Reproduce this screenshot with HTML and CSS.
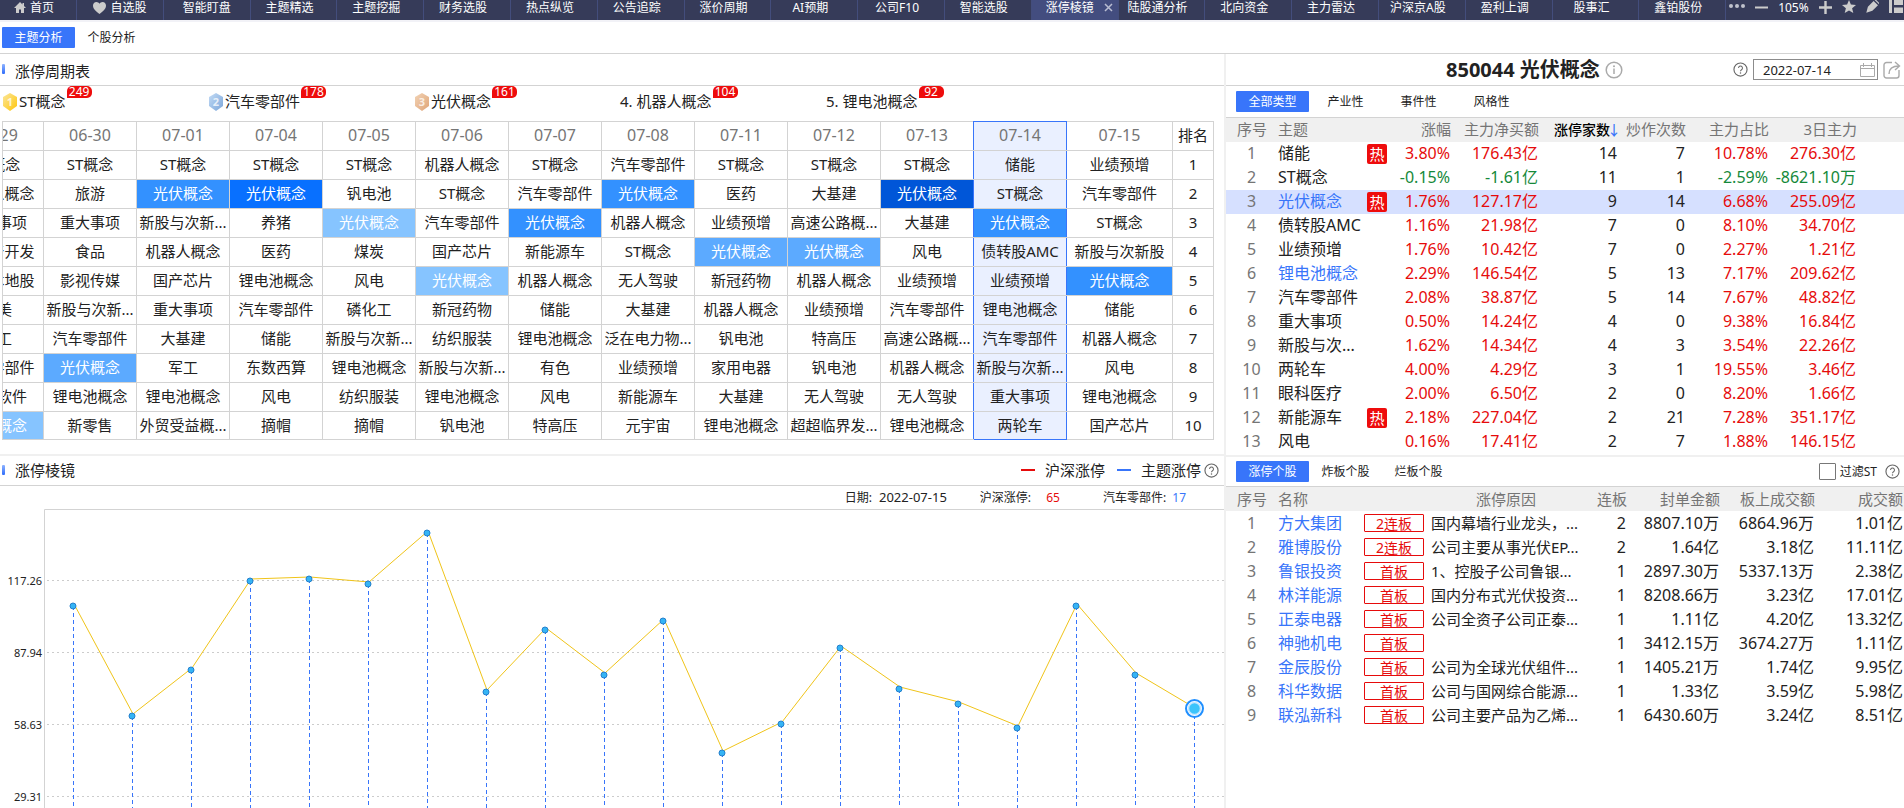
FILE: index.html
```html
<!DOCTYPE html>
<html lang="zh-CN">
<head>
<meta charset="utf-8">
<title>涨停棱镜</title>
<link rel="stylesheet" href="styles.css">
</head>
<body>
<svg class="defs" aria-hidden="true">
  <defs>
    <symbol id="help" viewBox="0 0 16 16"><circle cx="8" cy="8" r="7" fill="none" stroke="#666" stroke-width="1.2"/><path d="M5.9 6.4a2.1 2.1 0 1 1 3.2 1.8c-.8.5-1.1.8-1.1 1.6" fill="none" stroke="#666" stroke-width="1.1"/><circle cx="8" cy="11.7" r=".8" fill="#666"/></symbol>
    <linearGradient id="gold" x1="0" y1="0" x2="1" y2="1"><stop offset="0" stop-color="#fbe69a"/><stop offset="1" stop-color="#ffc60b"/></linearGradient>
    <linearGradient id="silver" x1="0" y1="0" x2="1" y2="1"><stop offset="0" stop-color="#c3dbf5"/><stop offset="1" stop-color="#7ba6da"/></linearGradient>
    <linearGradient id="bronze" x1="0" y1="0" x2="1" y2="1"><stop offset="0" stop-color="#f2d3b5"/><stop offset="1" stop-color="#dfa477"/></linearGradient>
  </defs>
</svg>

<nav class="topbar">
  <a class="nav-item home" href="#"><svg width="12" height="11" viewBox="0 0 12 11"><path d="M6 0 0 6h2v5h3V7.500h2V11h3V6h2L10 4V1H8.500v1.500z" fill="#ccc"/></svg>首页</a>
  <a class="nav-item" href="#"><svg width="13" height="12" viewBox="0 0 13 12"><path d="M6.500 12C3 9.500 0 7 0 3.600 0 1.500 1.500 0 3.400 0c1.300 0 2.500.7 3.100 1.800C7.100.7 8.300 0 9.600 0 11.500 0 13 1.500 13 3.600 13 7 10 9.500 6.500 12z" fill="#ccc"/></svg>自选股</a>
  <a class="nav-item" href="#">智能盯盘</a>
  <a class="nav-item" href="#">主题精选</a>
  <a class="nav-item" href="#">主题挖掘</a>
  <a class="nav-item" href="#">财务选股</a>
  <a class="nav-item" href="#">热点纵览</a>
  <a class="nav-item" href="#">公告追踪</a>
  <a class="nav-item" href="#">涨价周期</a>
  <a class="nav-item" href="#">AI预期</a>
  <a class="nav-item" href="#">公司F10</a>
  <a class="nav-item" href="#">智能选股</a>
  <a class="nav-item active" href="#">涨停棱镜<svg width="9" height="9" viewBox="0 0 9 9"><path d="m1 1 7 7M8 1 1 8" stroke="#b9bdd2" stroke-width="1.500"/></svg></a>
  <a class="nav-item" href="#">陆股通分析</a>
  <a class="nav-item" href="#">北向资金</a>
  <a class="nav-item" href="#">主力雷达</a>
  <a class="nav-item" href="#">沪深京A股</a>
  <a class="nav-item" href="#">盈利上调</a>
  <a class="nav-item" href="#">股事汇</a>
  <a class="nav-item" href="#">鑫铂股份</a>
  <div class="tools">
    <button type="button" aria-label="更多"><svg width="16" height="14" viewBox="0 0 16 14"><g fill="#bfc1cc"><circle cx="2" cy="6" r="2"/><circle cx="8" cy="6" r="2"/><circle cx="14" cy="6" r="2"/></g></svg></button>
    <button type="button" aria-label="缩小"><svg width="13" height="14" viewBox="0 0 13 14"><path d="M0 7.500h13" stroke="#ccc" stroke-width="2"/></svg></button>
    <span>105%</span>
    <button type="button" aria-label="放大"><svg width="13" height="14" viewBox="0 0 13 14"><path d="M0 7.500h13M6.500 1v13" stroke="#ccc" stroke-width="2.400"/></svg></button>
    <button type="button" aria-label="收藏"><svg width="14" height="14" viewBox="0 0 14 14"><path d="m7 0 1.900 4.600 5.100.4-3.900 3.200L11.300 13 7 10.400 2.700 13l1.200-4.800L0 5l5.100-.4z" fill="#ccc"/></svg></button>
    <button type="button" aria-label="画笔"><svg width="13" height="14" viewBox="0 0 13 14"><path d="m7.600 1 4.400 4.200-5.600 5.600L.3 12.800l1.600-6.100zM8.600 0h1.600L13 2.800v1.400z" fill="#ccc"/></svg></button>
    <button type="button" aria-label="布局"><svg width="14" height="14" viewBox="0 0 14 14"><path d="M0 0h3v13H0zM5 0h9v5H5zM5 7.500h9V13H5z" fill="#ccc"/></svg></button>
  </div>
</nav>

<div class="page-tabs">
  <button type="button" class="tab on">主题分析</button><button type="button" class="tab">个股分析</button>
</div>

<main class="layout">
  <section class="left">
    <header class="panel-title cycle"><h2>涨停周期表</h2></header>
    <div class="ranks">
      <div class="rank"><svg width="16" height="18" viewBox="0 0 16 18"><path d="m8 0 7 4v9l-7 5-7-5V4z" fill="url(#gold)"/><text x="8" y="13" class="medal">1</text></svg>ST概念<span class="count">249</span></div>
      <div class="rank"><svg width="16" height="18" viewBox="0 0 16 18"><path d="m8 0 7 4v9l-7 5-7-5V4z" fill="url(#silver)"/><text x="8" y="13" class="medal">2</text></svg>汽车零部件<span class="count">178</span></div>
      <div class="rank"><svg width="16" height="18" viewBox="0 0 16 18"><path d="m8 0 7 4v9l-7 5-7-5V4z" fill="url(#bronze)"/><text x="8" y="13" class="medal">3</text></svg>光伏概念<span class="count">161</span></div>
      <div class="rank">4. 机器人概念<span class="count">104</span></div>
      <div class="rank">5. 锂电池概念<span class="count">92</span></div>
    </div>

    <div class="cycle-wrap">
      <table class="cycle-table">
        <colgroup><col span="12" class="c-day"><col class="c-last"><col class="c-rank"></colgroup>
        <thead>
          <tr><th>06-29<th>06-30<th>07-01<th>07-04<th>07-05<th>07-06<th>07-07<th>07-08<th>07-11<th>07-12<th>07-13<th>07-14<th>07-15<th>排名</tr>
        </thead>
        <tbody>
          <tr><td>ST概念<td>ST概念<td>ST概念<td>ST概念<td>ST概念<td>机器人概念<td>ST概念<td>汽车零部件<td>ST概念<td>ST概念<td>ST概念<td>储能<td>业绩预增<td>1</tr>
          <tr><td>机器人概念<td>旅游<td class="h3">光伏概念<td class="h4">光伏概念<td>钒电池<td>ST概念<td>汽车零部件<td class="h3">光伏概念<td>医药<td>大基建<td class="h5">光伏概念<td>ST概念<td>汽车零部件<td>2</tr>
          <tr><td>重大事项<td>重大事项<td>新股与次新...<td>养猪<td class="h1">光伏概念<td>汽车零部件<td class="h3">光伏概念<td>机器人概念<td>业绩预增<td>高速公路概...<td>大基建<td class="h3">光伏概念<td>ST概念<td>3</tr>
          <tr><td>房地产开发<td>食品<td>机器人概念<td>医药<td>煤炭<td>国产芯片<td>新能源车<td>ST概念<td class="h2">光伏概念<td class="h2">光伏概念<td>风电<td>债转股AMC<td>新股与次新股<td>4</tr>
          <tr><td>深圳本地股<td>影视传媒<td>国产芯片<td>锂电池概念<td>风电<td class="h1">光伏概念<td>机器人概念<td>无人驾驶<td>新冠药物<td>机器人概念<td>业绩预增<td>业绩预增<td class="h3">光伏概念<td>5</tr>
          <tr><td>医美<td>新股与次新...<td>重大事项<td>汽车零部件<td>磷化工<td>新冠药物<td>储能<td>大基建<td>机器人概念<td>业绩预增<td>汽车零部件<td>锂电池概念<td>储能<td>6</tr>
          <tr><td>军工<td>汽车零部件<td>大基建<td>储能<td>新股与次新...<td>纺织服装<td>锂电池概念<td>泛在电力物...<td>钒电池<td>特高压<td>高速公路概...<td>汽车零部件<td>机器人概念<td>7</tr>
          <tr><td>汽车零部件<td class="h2">光伏概念<td>军工<td>东数西算<td>锂电池概念<td>新股与次新...<td>有色<td>业绩预增<td>家用电器<td>钒电池<td>机器人概念<td>新股与次新...<td>风电<td>8</tr>
          <tr><td>国产软件<td>锂电池概念<td>锂电池概念<td>风电<td>纺织服装<td>锂电池概念<td>风电<td>新能源车<td>大基建<td>无人驾驶<td>无人驾驶<td>重大事项<td>锂电池概念<td>9</tr>
          <tr><td class="h1">光伏概念<td>新零售<td>外贸受益概...<td>摘帽<td>摘帽<td>钒电池<td>特高压<td>元宇宙<td>锂电池概念<td>超超临界发...<td>锂电池概念<td>两轮车<td>国产芯片<td>10</tr>
        </tbody>
      </table>
    </div>

    <header class="panel-title prism">
      <h2>涨停棱镜</h2>
      <div class="legend">
        <span class="dash red-bg"></span><span>沪深涨停</span>
        <span class="dash blue-bg"></span><span class="legend-end">主题涨停<svg width="15" height="15"><use href="#help"/></svg></span>
      </div>
    </header>
    <div class="readout">
      <span>日期: <b class="day">2022-07-15</b></span>
      <span>沪深涨停: <b class="hs">65</b></span>
      <span>汽车零部件: <b class="th">17</b></span>
    </div>
    <svg class="chart" viewBox="0 0 1224 299" role="img" aria-label="涨停家数走势">
      <path class="frame" d="M1224 .5H44.500V299"/>
      <path class="grid" d="M47 71.500H1224M47 143.500H1224M47 215.500H1224M47 287.500H1224"/>
      <g class="axis"><text x="42" y="76">117.26</text><text x="42" y="148">87.94</text><text x="42" y="220">58.63</text><text x="42" y="292">29.31</text></g>
      <path class="drops" d="M73.500 97V299M132.500 207V299M191.500 161V299M250.500 72V299M309.500 70V299M368.500 75V299M427.500 24V299M486.500 183V299M545.500 121V299M604.500 166V299M663.500 112V299M722.500 244V299M781.500 215V299M840.500 139V299M899.500 180V299M958.500 195V299M1017.500 219V299M1076.500 97V299M1135.500 166V299M1194.500 199V299"/>
      <polyline class="line" points="74,95 133,205 192,159 251,70 310,68 369,73 428,22 487,181 546,119 605,164 664,110 723,242 782,213 841,137 900,178 959,193 1018,217 1077,95 1136,164 1195,199"/>
      <g class="dots"><circle cx="73" cy="97" r="3"/><circle cx="132" cy="207" r="3"/><circle cx="191" cy="161" r="3"/><circle cx="250" cy="72" r="3"/><circle cx="309" cy="70" r="3"/><circle cx="368" cy="75" r="3"/><circle cx="427" cy="24" r="3"/><circle cx="486" cy="183" r="3"/><circle cx="545" cy="121" r="3"/><circle cx="604" cy="166" r="3"/><circle cx="663" cy="112" r="3"/><circle cx="722" cy="244" r="3"/><circle cx="781" cy="215" r="3"/><circle cx="840" cy="139" r="3"/><circle cx="899" cy="180" r="3"/><circle cx="958" cy="195" r="3"/><circle cx="1017" cy="219" r="3"/><circle cx="1076" cy="97" r="3"/><circle cx="1135" cy="166" r="3"/></g>
      <circle cx="1194.500" cy="199.500" r="8.500" fill="#fff" stroke="#1f8fff" stroke-width="2"/><circle cx="1194.500" cy="199.500" r="6" fill="#3cc4fb" stroke="#c5e6ff" stroke-width="1.500"/>
    </svg>
  </section>

  <section class="right">
    <header class="theme-head">
      <h1>850044 光伏概念</h1>
      <svg width="18" height="18" viewBox="0 0 18 18"><circle cx="9" cy="9" r="7.800" fill="none" stroke="#aaa" stroke-width="1.500"/><path d="M9 7.500v5.500" stroke="#aaa" stroke-width="1.500"/><circle cx="9" cy="5.200" r="1" fill="#aaa"/></svg>
      <div class="date-tools">
        <svg width="15" height="15"><use href="#help"/></svg>
        <label class="date-box"><input type="text" value="2022-07-14" aria-label="日期"><svg width="15" height="14" viewBox="0 0 15 14"><path d="M.5 2.500h14v11H.5zM.5 5.500h14M3.500 0v4M11.500 0v4M5.500 2.500h4" fill="none" stroke="#aaa"/></svg></label>
        <button type="button" aria-label="分享"><svg width="18" height="18" viewBox="0 0 18 18"><path d="M9 1.500H3.500a2.500 2.500 0 0 0-2.500 2.500v10.500A2.500 2.500 0 0 0 3.500 17h10a2.500 2.500 0 0 0 2.500-2.500V9M6 13c0-5 3-8 10-8M12 1l4.500 4L12 9" fill="none" stroke="#aaa" stroke-width="1.400"/></svg></button>
      </div>
    </header>
    <div class="sub-tabs upper">
      <button type="button" class="tab on">全部类型</button><button type="button" class="tab">产业性</button><button type="button" class="tab">事件性</button><button type="button" class="tab">风格性</button>
    </div>
    <div class="theme-list">
      <table class="data themes">
        <colgroup><col class="w52"><col class="w89"><col class="w20"><col class="w64"><col class="w88"><col class="w79"><col class="w68"><col class="w83"><col class="w88"><col class="w47"></colgroup>
        <thead><tr><th>序号<th>主题<th><th>涨幅<th>主力净买额<th class="sorted">涨停家数<i>↓</i><th>炒作次数<th>主力占比<th>3日主力<th></tr></thead>
        <tbody>
          <tr><td>1<td>储能<td><em>热</em><td>3.80%<td>176.43亿<td>14<td>7<td>10.78%<td>276.30亿<td></tr>
          <tr class="down"><td>2<td>ST概念<td><td>-0.15%<td>-1.61亿<td>11<td>1<td>-2.59%<td>-8621.10万<td></tr>
          <tr class="picked"><td>3<td><a href="#">光伏概念</a><td><em>热</em><td>1.76%<td>127.17亿<td>9<td>14<td>6.68%<td>255.09亿<td></tr>
          <tr><td>4<td>债转股AMC<td><td>1.16%<td>21.98亿<td>7<td>0<td>8.10%<td>34.70亿<td></tr>
          <tr><td>5<td>业绩预增<td><td>1.76%<td>10.42亿<td>7<td>0<td>2.27%<td>1.21亿<td></tr>
          <tr><td>6<td><a href="#">锂电池概念</a><td><td>2.29%<td>146.54亿<td>5<td>13<td>7.17%<td>209.62亿<td></tr>
          <tr><td>7<td>汽车零部件<td><td>2.08%<td>38.87亿<td>5<td>14<td>7.67%<td>48.82亿<td></tr>
          <tr><td>8<td>重大事项<td><td>0.50%<td>14.24亿<td>4<td>0<td>9.38%<td>16.84亿<td></tr>
          <tr><td>9<td>新股与次...<td><td>1.62%<td>14.34亿<td>4<td>3<td>3.54%<td>22.26亿<td></tr>
          <tr><td>10<td>两轮车<td><td>4.00%<td>4.29亿<td>3<td>1<td>19.55%<td>3.46亿<td></tr>
          <tr><td>11<td>眼科医疗<td><td>2.00%<td>6.50亿<td>2<td>0<td>8.20%<td>1.66亿<td></tr>
          <tr><td>12<td>新能源车<td><em>热</em><td>2.18%<td>227.04亿<td>2<td>21<td>7.28%<td>351.17亿<td></tr>
          <tr><td>13<td>风电<td><td>0.16%<td>17.41亿<td>2<td>7<td>1.88%<td>146.15亿<td></tr>
        </tbody>
      </table>
    </div>
    <div class="sub-tabs lower">
      <button type="button" class="tab on">涨停个股</button><button type="button" class="tab">炸板个股</button><button type="button" class="tab">烂板个股</button>
      <div class="filter"><input type="checkbox" id="st"><label for="st">过滤ST</label><svg width="15" height="15"><use href="#help"/></svg></div>
    </div>
    <table class="data stocks">
      <colgroup><col class="w52"><col class="w86"><col class="w67"><col class="w150"><col class="w46"><col class="w93"><col class="w95"><col class="w89"></colgroup>
      <thead><tr><th>序号<th>名称<th><th>涨停原因<th>连板<th>封单金额<th>板上成交额<th>成交额</tr></thead>
      <tbody>
        <tr><td>1<td><a href="#">方大集团</a><td><b>2连板</b><td>国内幕墙行业龙头，...<td>2<td>8807.10万<td>6864.96万<td>1.01亿</tr>
        <tr><td>2<td><a href="#">雅博股份</a><td><b>2连板</b><td>公司主要从事光伏EP...<td>2<td>1.64亿<td>3.18亿<td>11.11亿</tr>
        <tr><td>3<td><a href="#">鲁银投资</a><td><b>首板</b><td>1、控股子公司鲁银...<td>1<td>2897.30万<td>5337.13万<td>2.38亿</tr>
        <tr><td>4<td><a href="#">林洋能源</a><td><b>首板</b><td>国内分布式光伏投资...<td>1<td>8208.66万<td>3.23亿<td>17.01亿</tr>
        <tr><td>5<td><a href="#">正泰电器</a><td><b>首板</b><td>公司全资子公司正泰...<td>1<td>1.11亿<td>4.20亿<td>13.32亿</tr>
        <tr><td>6<td><a href="#">神驰机电</a><td><b>首板</b><td><td>1<td>3412.15万<td>3674.27万<td>1.11亿</tr>
        <tr><td>7<td><a href="#">金辰股份</a><td><b>首板</b><td>公司为全球光伏组件...<td>1<td>1405.21万<td>1.74亿<td>9.95亿</tr>
        <tr><td>8<td><a href="#">科华数据</a><td><b>首板</b><td>公司与国网综合能源...<td>1<td>1.33亿<td>3.59亿<td>5.98亿</tr>
        <tr><td>9<td><a href="#">联泓新科</a><td><b>首板</b><td>公司主要产品为乙烯...<td>1<td>6430.60万<td>3.24亿<td>8.51亿</tr>
      </tbody>
    </table>
  </section>
</main>
</body>
</html>
```
FILE: styles.css
```css
:root {
  --blue: #3875fa;
  --red: #e60b0b;
  --green: #15893a;
  --line: #d3d3d3;
  --soft: #f0f0f0;
  --text: #222;
  --muted: #757575;
}
* { box-sizing: border-box; }
body {
  margin: 0;
  min-height: 100vh;
  display: flex;
  flex-direction: column;
  background: #fff;
  color: var(--text);
  font: 15px/24px "Noto Sans", "Noto Sans CJK SC", sans-serif;
  overflow: hidden;
}
button, input { font: inherit; color: inherit; }
button { border: 0; padding: 0; background: none; cursor: pointer; }
a { color: var(--blue); text-decoration: none; }
svg { display: block; flex: none; }
h1, h2 { margin: 0; font-size: 15px; font-weight: 400; }
table { border-collapse: collapse; table-layout: fixed; white-space: nowrap; }
th { font-weight: 400; }
th, td { padding: 0; }
.defs { position: absolute; width: 0; height: 0; }

.topbar {
  display: flex;
  height: 22px;
  background: #363b59;
  border-bottom: 2px solid #f2f2f7;
  font-size: 12px;
  line-height: 15px;
  color: #fff;
}
.nav-item {
  flex: 1 1 86px;
  display: flex;
  justify-content: center;
  gap: 4px;
  padding-bottom: 5px;
  align-items: center;
  border-right: 1px solid #434d7c;
  color: #fff;
  white-space: nowrap;
}
.nav-item.home { flex: 0 0 77px; padding-right: 8px; }
.nav-item:nth-child(n+4) { padding-right: 8px; }
.nav-item.active { background: #434d7f; gap: 10px; padding: 0 0 5px 9px; }
.tools {
  flex: 0 0 178px;
  display: flex;
  align-items: flex-start;
  gap: 10px;
  padding-left: 3px;
}

.tab {
  width: 73px;
  height: 21px;
  border-radius: 1px;
  font-size: 12px;
  line-height: 21px;
}
.tab.on { background: var(--blue); color: #fff; }
.page-tabs { display: flex; padding: 5px 2px; border-bottom: 1px solid var(--line); }

.layout { flex: 1; display: grid; grid-template-columns: minmax(0, 1224fr) minmax(0, 680fr); }

.panel-title {
  display: flex;
  justify-content: space-between;
  align-items: center;
  padding: 0 5px 0 2px;
  border-bottom: 1px solid var(--line);
}
.panel-title h2 { display: flex; align-items: center; gap: 10px; }
.panel-title h2::before {
  content: "";
  width: 3px;
  height: 10px;
  border-radius: 1px;
  background: linear-gradient(#8fb3ff, #2f6dfb);
}
.cycle { height: 32px; padding-top: 3px; }
.cycle h2::before { margin-bottom: 4px; }
.ranks { display: flex; height: 35px; padding-left: 2px; line-height: 31px; }
.rank { width: 206px; display: flex; gap: 1px; }
.rank svg { margin-top: 7px; }
.medal { font-size: 11px; font-weight: 700; fill: #fff; fill-opacity: .75; text-anchor: middle; }
.count {
  min-width: 25px;
  height: 12px;
  padding: 0 2px;
  border-radius: 5px 5px 5px 0;
  background: #ee0c0c;
  color: #fff;
  font-size: 12px;
  line-height: 12px;
  text-align: center;
}

.cycle-wrap { margin: 0 10px 14px 2px; border-left: 1px solid var(--line); overflow: hidden; }
.cycle-table { width: calc(100% + 53px); margin-left: -53px; text-align: center; }
.c-day { width: 93px; }
.c-rank { width: 41px; }
.cycle-table th, .cycle-table td { height: 29px; line-height: 26px; vertical-align: top; border: 1px solid var(--line); overflow: hidden; }
.cycle-table tr:last-child > td { height: 28px; }
.cycle-table th { font-size: 16px; color: var(--muted); }
.cycle-table th:last-child { font-size: 15px; color: var(--text); }
.cycle-table tr > :nth-child(11) { border-right-color: var(--blue); }
.cycle-table tr > :nth-child(12) { background: #eaf0ff; border-left-color: var(--blue); border-right-color: var(--blue); }
.cycle-table thead tr > :nth-child(12) { border-top-color: var(--blue); }
.cycle-table tr:last-child > td:nth-child(12) { border-bottom-color: var(--blue); }
.cycle-table tr > td.h1 { background: #86c4ff; color: #fff; }
.cycle-table tr > td.h2 { background: #5caaff; color: #fff; }
.cycle-table tr > td.h3 { background: #3391ff; color: #fff; }
.cycle-table tr > td.h4 { background: #0870ff; color: #fff; }
.cycle-table tr > td.h5 { background: #0056d8; color: #fff; }

.prism { height: 32px; border-top: 2px solid var(--soft); line-height: 22px; padding-bottom: 1px; }
.legend { display: flex; align-items: center; gap: 10px; }
.legend-end { display: flex; align-items: center; gap: 3px; }
.dash { width: 14px; height: 2px; }
.red-bg { background: var(--red); }
.blue-bg { margin-left: 2px; background: var(--blue); }
.readout {
  display: flex;
  justify-content: flex-end;
  gap: 33px;
  height: 23px;
  padding-right: 38px;
  font-size: 12px;
  line-height: 23px;
}
.readout b { font-weight: 400; }
.readout .day { margin-left: 4px; font-size: 13px; }
.readout .hs { margin-left: 12px; margin-right: 10px; color: var(--red); }
.readout .th { margin-left: 3px; color: var(--blue); }
.chart { width: 100%; height: auto; }
.frame { fill: none; stroke: var(--line); }
.grid { stroke: #ccc; stroke-dasharray: 2 3; }
.axis { font-size: 11px; fill: var(--text); text-anchor: end; }
.drops { stroke: var(--blue); stroke-dasharray: 4 3; }
.line { fill: none; stroke: #f0c419; }
.dots { fill: #35b4f5; stroke: #2480cc; }

.right { border-left: 2px solid var(--soft); }
.theme-head {
  display: flex;
  align-items: center;
  gap: 5px;
  height: 32px;
  padding-left: 220px;
  border-bottom: 1px solid var(--line);
}
.theme-head h1 { font-size: 20px; font-weight: 700; white-space: nowrap; }
.date-tools { margin-left: auto; padding-right: 3px; display: flex; align-items: center; gap: 5px; }
.date-box {
  display: flex;
  align-items: center;
  width: 125px;
  height: 21px;
  padding: 0 2px 0 9px;
  border: 1px solid #8c8c8c;
}
.date-box input { flex: 1; min-width: 0; border: 0; padding: 0; background: none; font-size: 13px; line-height: 18px; outline: 0; }
.sub-tabs { display: flex; align-items: center; padding-left: 10px; border-bottom: 1px solid var(--line); }
.upper { height: 32px; }
.lower { height: 32px; border-top: 2px solid var(--soft); }
.filter { margin-left: auto; padding-right: 4px; display: flex; align-items: center; gap: 4px; font-size: 12px; }
.filter input { appearance: none; width: 17px; height: 17px; margin: 0; border: 1px solid #777; border-radius: 1px; background: #fff; }
.filter svg { margin-left: 4px; }

.theme-list { height: 330px; margin-bottom: 7px; overflow: hidden; }
.data { width: 100%; text-align: right; }
.data th { height: 24px; background: var(--soft); color: var(--muted); }
.data td { height: 24px; padding-right: 1px; line-height: 24px; font-size: 16px; }
.data tr > :nth-child(1) { text-align: center; }
.data tr > td:nth-child(1) { color: var(--muted); }
.data tr > :nth-child(2) { text-align: left; }
.themes th { line-height: 22px; vertical-align: top; }
.themes td { line-height: 22px; vertical-align: top; }
.themes td:nth-child(4), .themes td:nth-child(5), .themes td:nth-child(8), .themes td:nth-child(9) { color: var(--red); }
.themes .down td:nth-child(n+4):not(:nth-child(6)):not(:nth-child(7)) { color: var(--green); }
.themes .picked { background: #d6e0ff; }
.themes td:nth-child(3) { padding: 2px 0 0; }
.themes em {
  display: block;
  width: 20px;
  height: 20px;
  border-radius: 2px;
  background: #ee0c0c;
  color: #fff;
  font-size: 15px;
  font-style: normal;
  line-height: 20px;
  text-align: center;
}
.data .sorted { color: #000; font-size: 14px; font-weight: 500; }
.sorted i { color: var(--blue); font-style: normal; font-family: "Noto Sans CJK SC", sans-serif; display: inline-block; width: 8px; text-indent: -3px; }
.stocks td:nth-child(3) { padding-right: 7px; }
.stocks b {
  display: block;
  height: 18px;
  border: 1px solid var(--red);
  border-radius: 1px;
  color: var(--red);
  font-size: 14px;
  font-weight: 400;
  line-height: 18px;
  text-align: center;
}
.stocks th:nth-child(4) { text-align: center; }
.stocks td:nth-child(4) { text-align: left; font-size: 15px; }
.stocks tr > :last-child { padding-right: 1px; }
.w20 { width: 20px; }
.w46 { width: 46px; }
.w47 { width: 47px; }
.w52 { width: 52px; }
.w64 { width: 64px; }
.w67 { width: 67px; }
.w68 { width: 68px; }
.w79 { width: 79px; }
.w83 { width: 83px; }
.w86 { width: 86px; }
.w88 { width: 88px; }
.w89 { width: 89px; }
.w93 { width: 93px; }
.w95 { width: 95px; }
.w150 { width: 150px; }
```
